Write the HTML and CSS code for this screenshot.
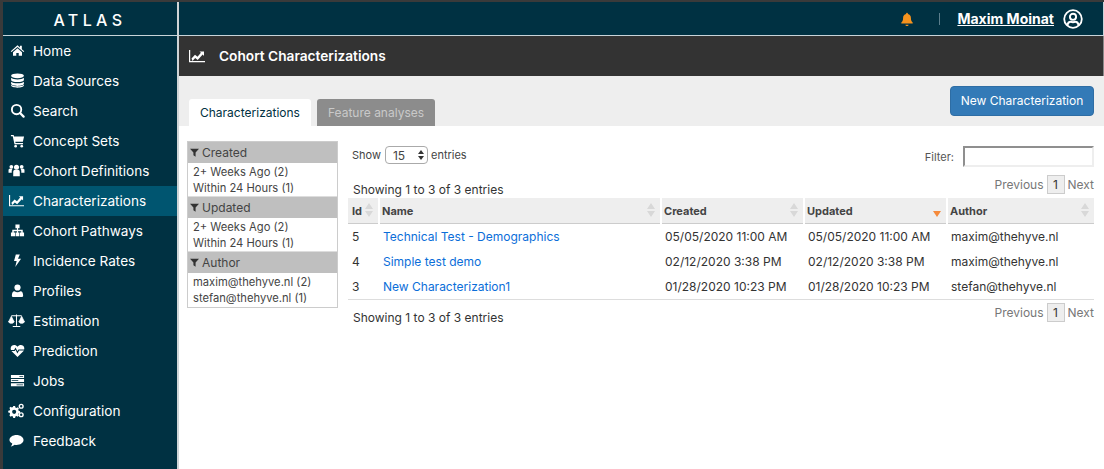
FILE: index.html
```html
<!DOCTYPE html>
<html lang="en">
<head>
    <meta charset="UTF-8">
    <meta name="viewport" content="width=device-width, initial-scale=1.0">
    <title>ATLAS - Cohort Characterizations</title>
    <link rel="stylesheet" href="styles.css">
</head>
<body>
    <div class="app">
        <aside class="sidebar">
            <div class="brand">ATLAS</div>
            <nav class="side-nav">
                <a href="#"><svg class="nav-icon" viewBox="0 0 16 16"><path d="M8 2.500 .8 8.800l.8.9L8 4.200l6.400 5.500.8-.9-2.600-2.200V3h-2v1.800z"/><path d="M3.200 9.800 8 5.700l4.800 4.100v3.900H9.300v-3H6.700v3H3.200z"/></svg>Home</a>
                <a href="#"><svg class="nav-icon" viewBox="0 0 16 16"><ellipse cx="8" cy="3" rx="6.800" ry="2.600"/><path d="M1.200 5.100v2.300c0 1.300 3 2.300 6.800 2.300s6.800-1 6.800-2.300V5.100C13.500 6.300 11 6.800 8 6.800s-5.500-.5-6.800-1.700z"/><path d="M1.200 9.200v2.300c0 1.300 3 2.300 6.800 2.300s6.800-1 6.800-2.300V9.200c-1.300 1.200-3.800 1.700-6.800 1.700s-5.500-.5-6.800-1.700z"/><path d="M1.200 12.400v.9c0 1.300 3 2.300 6.800 2.300s6.800-1 6.800-2.300v-.9c-1.300 1.200-3.800 1.700-6.800 1.700s-5.500-.5-6.800-1.700z"/></svg>Data Sources</a>
                <a href="#"><svg class="nav-icon" viewBox="0 0 16 16"><circle cx="7" cy="7" r="5" fill="none" stroke="#fff" stroke-width="2"/><path d="m10.700 10.700 3.800 3.800" stroke="#fff" stroke-width="2.400" stroke-linecap="round"/></svg>Search</a>
                <a href="#"><svg class="nav-icon" viewBox="0 0 16 16"><path d="M1 2.200h2.900l.4 1.500h10.700l-1.300 5.700H5.600l.3 1.300h8v1.200H4.800L2.900 3.400H1z"/><circle cx="6" cy="14" r="1.400"/><circle cx="12.500" cy="14" r="1.400"/></svg>Concept Sets</a>
                <a href="#" class="wide"><svg class="nav-icon" viewBox="0 0 18 16"><circle cx="9" cy="4.500" r="2.700"/><circle cx="3.500" cy="4" r="2"/><circle cx="14.500" cy="4" r="2"/><path d="M5.500 9.500c0-1.400 1-2.200 2-2.200h3c1 0 2 .8 2 2.200v4.500h-7z"/><path d="M.5 7.500c0-.9.7-1.400 1.500-1.400h2.800c-.6.700-.9 1.500-.9 2.400v1.800H.5zM17.500 7.500c0-.9-.7-1.400-1.500-1.400h-2.800c.6.700.9 1.500.9 2.400v1.800h3.400z"/></svg>Cohort Definitions</a>
                <a href="#" class="active wide"><svg class="nav-icon" viewBox="0 0 16 16"><path d="M0 2h1.200v11H16v1.200H0z"/><path d="m2.500 10.500 3.500-3.700 2.500 2 3.400-4-1.400-1.300H15v4.500l-1.300-1.400-5 5.400-2.500-2-2.700 2.900z"/></svg>Characterizations</a>
                <a href="#"><svg class="nav-icon" viewBox="0 0 16 16"><path d="M5.800 1.500h4.400v4H8.600v1.700h5v3h1.400v4h-4.400v-4H12V8.800H8.600v1.400H10v4H6v-4h1.400V8.800H4v1.400h1.400v4H1v-4h1.400v-3h5V5.500H5.800z"/></svg>Cohort Pathways</a>
                <a href="#"><svg class="nav-icon" viewBox="0 0 16 16"><path d="M6.200 1.500h4.300L8.500 6h3.300l-6.200 9 1.500-6.400H4.300z"/></svg>Incidence Rates</a>
                <a href="#"><svg class="nav-icon" viewBox="0 0 16 16"><circle cx="8" cy="4.800" r="3.300"/><path d="M3 14.800c-.7 0-1-.5-1-1.200 0-2.500.8-4.800 2.900-4.800.9.700 1.900 1.100 3.100 1.100s2.200-.4 3.100-1.100c2.100 0 2.900 2.300 2.900 4.800 0 .7-.3 1.200-1 1.200z"/></svg>Profiles</a>
                <a href="#" class="wide"><svg class="nav-icon" viewBox="0 0 18 16" fill="none" stroke="#fff"><path d="M9 1.500v12M5 14.500h8M3.500 3h11" stroke-width="1.100"/><path d="m3.500 3.500-2.700 5.500h5.400zM14.500 3.500l-2.700 5.500h5.400z" stroke-width=".8"/><path d="M.5 9c.3 1.300 1.400 2 3 2s2.700-.7 3-2zM11.500 9c.3 1.300 1.400 2 3 2s2.700-.7 3-2z" stroke-width=".8"/></svg>Estimation</a>
                <a href="#"><svg class="nav-icon" viewBox="0 0 16 16"><path d="M8 14.800 1.800 8.700C.2 6.900.5 4.300 2 3c1.700-1.400 4.400-1.100 6 .9 1.600-2 4.300-2.300 6-.9 1.500 1.300 1.800 3.900.2 5.700z"/><path d="M.5 8h4.200l1.200-2 2 4 1.500-2.500h6.100" fill="none" stroke="#003142" stroke-width="1.100"/></svg>Prediction</a>
                <a href="#"><svg class="nav-icon" viewBox="0 0 16 16"><path d="M1 2h14v3.200H1zM1 6.500h14v3.200H1zM1 11h14v3.200H1z"/><path d="M10 3.200h4v.8h-4zM1.800 7.700h7v.8h-7zM7 12.200h7v.8H7z" fill="#003142"/></svg>Jobs</a>
                <a href="#" class="wide"><svg class="nav-icon" viewBox="0 0 18 16"><path fill-rule="evenodd" d="M5.500 3.200h2l.3 1.500 1.200.6 1.300-.8 1.300 1.300-.8 1.300.5 1.200 1.500.4v1.900l-1.500.3-.5 1.200.8 1.300-1.300 1.300-1.300-.8-1.200.5-.3 1.500h-2l-.3-1.500-1.200-.5-1.300.8L1.400 13l.8-1.300-.5-1.200-1.500-.3V8.300l1.500-.4.5-1.200-.8-1.300 1.300-1.300 1.300.8 1.200-.6zM6.500 7.200a2.200 2.200 0 1 0 0 4.400 2.200 2.200 0 0 0 0-4.400z"/><circle cx="14" cy="3.500" r="2" fill="none" stroke="#fff" stroke-width="1.500"/><circle cx="14" cy="12.500" r="2" fill="none" stroke="#fff" stroke-width="1.500"/></svg>Configuration</a>
                <a href="#" class="wide"><svg class="nav-icon" viewBox="0 0 16 16"><path d="M8 2.200c4 0 7.500 2.300 7.500 5.300S12 12.800 8 12.800c-.7 0-1.300-.1-1.900-.2-1 .9-2.500 1.500-4.200 1.700 1-.9 1.500-2 1.600-3C1.600 10.300.5 9 .5 7.500c0-3 3.500-5.300 7.500-5.300z"/></svg>Feedback</a>
            </nav>
        </aside>

        <div class="main">
            <header class="topbar">
                <svg class="bell" viewBox="0 0 16 16"><path d="M8 .8c.6 0 1 .4 1 1v.6c2.300.5 3.500 2.300 3.500 4.600 0 2.600.7 3.700 2 5v1H1.500v-1c1.300-1.300 2-2.400 2-5 0-2.300 1.200-4.100 3.500-4.600v-.6c0-.6.400-1 1-1zM6.200 14.500h3.600c0 1-.8 1.500-1.800 1.500s-1.800-.5-1.800-1.500z"/></svg>
                <span class="topbar-sep"></span>
                <a href="#" class="user-name">Maxim Moinat</a>
                <svg class="user-icon" viewBox="0 0 20 20" fill="none" stroke="#fff"><circle cx="10" cy="10" r="8.800" stroke-width="1.800"/><circle cx="10" cy="7.800" r="3.100" stroke-width="1.900"/><path d="M4.300 16.300c.5-2.500 2-3.600 3.400-3.600.7.400 1.400.6 2.300.6s1.600-.2 2.300-.6c1.400 0 2.900 1.100 3.400 3.600" stroke-width="2"/></svg>
            </header>

            <div class="page-title">
                <svg class="title-icon" viewBox="0 0 16 16"><path d="M0 2h1.200v11H16v1.200H0z"/><path d="m2.500 10.500 3.500-3.700 2.500 2 3.400-4-1.400-1.300H15v4.500l-1.300-1.400-5 5.400-2.500-2-2.700 2.900z"/></svg>
                <h1>Cohort Characterizations</h1>
            </div>

            <div class="tabs-row">
                <div class="tabs">
                    <a href="#" class="tab active">Characterizations</a>
                    <a href="#" class="tab muted">Feature analyses</a>
                </div>
                <button class="btn-primary">New Characterization</button>
            </div>

            <div class="content">
                <div class="facets">
                    <div class="facet-head"><svg class="funnel" viewBox="0 0 10 10"><path d="M0 .8h10L6.200 5v4.700L3.800 8V5z"/></svg>Created</div>
                    <div class="facet-body">
                        <div>2+ Weeks Ago (2)</div>
                        <div>Within 24 Hours (1)</div>
                    </div>
                    <div class="facet-head"><svg class="funnel" viewBox="0 0 10 10"><path d="M0 .8h10L6.200 5v4.700L3.800 8V5z"/></svg>Updated</div>
                    <div class="facet-body">
                        <div>2+ Weeks Ago (2)</div>
                        <div>Within 24 Hours (1)</div>
                    </div>
                    <div class="facet-head"><svg class="funnel" viewBox="0 0 10 10"><path d="M0 .8h10L6.200 5v4.700L3.800 8V5z"/></svg>Author</div>
                    <div class="facet-body">
                        <div>maxim@thehyve.nl (2)</div>
                        <div>stefan@thehyve.nl (1)</div>
                    </div>
                </div>

                <div class="table-area">
                    <div class="table-controls">
                        <div class="length">Show <span class="fake-select">15<span class="select-arrows"></span></span> entries</div>
                        <div class="filter">Filter:<span class="filter-input"></span></div>
                    </div>
                    <div class="info-row">
                        <span class="info">Showing 1 to 3 of 3 entries</span>
                        <div class="pager"><span>Previous</span><span class="page-num">1</span><span>Next</span></div>
                    </div>
                    <table>
                        <thead>
                            <tr>
                                <th class="col-id">Id<span class="sort"></span></th>
                                <th class="col-name">Name<span class="sort"></span></th>
                                <th class="col-date">Created<span class="sort"></span></th>
                                <th class="col-date">Updated<span class="sort-desc"></span></th>
                                <th>Author<span class="sort"></span></th>
                            </tr>
                        </thead>
                        <tbody>
                            <tr>
                                <td>5</td>
                                <td><a href="#">Technical Test - Demographics</a></td>
                                <td>05/05/2020 11:00 AM</td>
                                <td>05/05/2020 11:00 AM</td>
                                <td>maxim@thehyve.nl</td>
                            </tr>
                            <tr>
                                <td>4</td>
                                <td><a href="#">Simple test demo</a></td>
                                <td>02/12/2020 3:38 PM</td>
                                <td>02/12/2020 3:38 PM</td>
                                <td>maxim@thehyve.nl</td>
                            </tr>
                            <tr>
                                <td>3</td>
                                <td><a href="#">New Characterization1</a></td>
                                <td>01/28/2020 10:23 PM</td>
                                <td>01/28/2020 10:23 PM</td>
                                <td>stefan@thehyve.nl</td>
                            </tr>
                        </tbody>
                    </table>
                    <div class="info-row">
                        <span class="info">Showing 1 to 3 of 3 entries</span>
                        <div class="pager"><span>Previous</span><span class="page-num">1</span><span>Next</span></div>
                    </div>
                </div>
            </div>
        </div>
    </div>
</body>
</html>
```

FILE: styles.css
```css
/* Common Styles */
html, body {
    margin: 0;
    padding: 0;
    height: 100%;
    overflow: hidden;
}
body {
    font-family: 'Inter', 'Liberation Sans', sans-serif;
    font-size: 12px;
    color: #333;
    background-color: #3a3a3a;
}
a { text-decoration: none; }

.app {
    display: flex;
    height: 469px;
    padding: 2px 0 0 3px;
    box-sizing: border-box;
}

/* Sidebar */
.sidebar {
    width: 174px;
    flex-shrink: 0;
    background-color: #003142;
    color: #fff;
}
.brand {
    height: 33px;
    border-bottom: 1px solid #c8d4d9;
    text-align: center;
    font-size: 16px;
    font-weight: 500;
    letter-spacing: 4.400px;
    line-height: 36px;
}
.side-nav a {
    display: flex;
    align-items: center;
    height: 30px;
    box-sizing: border-box;
    padding: 0 0 1px 30px;
    color: #fff;
    font-size: 13.600px;
    position: relative;
}
.side-nav a.active { background-color: #005570; }
.nav-icon {
    position: absolute;
    left: 7px;
    top: 7px;
    width: 15px;
    height: 15px;
    fill: #fff;
}
.wide .nav-icon { left: 5px; width: 17px; }

/* Top bar */
.main {
    flex: 1;
    min-width: 0;
    border-left: 2px solid #cfd4d6;
    background-color: #fff;
    display: flex;
    flex-direction: column;
}
.topbar {
    height: 33px;
    border-bottom: 1px solid #c8d4d9;
    border-right: 1px solid #c8d4d9;
    background-color: #003142;
    display: flex;
    align-items: center;
    justify-content: flex-end;
    padding-right: 20px;
}
.bell { width: 14px; height: 14px; fill: #f6931e; }
.topbar-sep {
    width: 1px;
    height: 12px;
    background-color: #5b7e8c;
    margin: 0 17px 0 25px;
}
.user-name {
    color: #fff;
    font-size: 14px;
    font-weight: 700;
    text-decoration: underline;
}
.user-icon { width: 20px; height: 20px; margin-left: 9px; }

/* Title */
.page-title {
    height: 40px;
    background-color: #333;
    border-right: 1px solid #8a8a8a;
    display: flex;
    align-items: center;
    padding-left: 10px;
    color: #fff;
}
.title-icon { width: 16px; height: 16px; fill: #fff; }
.page-title h1 {
    margin: 0 0 0 14px;
    font-size: 13.700px;
    font-weight: 600;
}

/* Tabs */
.tabs-row {
    height: 50px;
    background-color: #eee;
    display: flex;
    justify-content: space-between;
    padding: 10px 10px 0 10px;
    box-sizing: border-box;
}
.tabs { display: flex; align-items: flex-end; gap: 6px; }
.tab {
    height: 27px;
    line-height: 28px;
    padding: 0 11px;
    border-radius: 3px 3px 0 0;
    font-size: 12px;
}
.tab.active { background-color: #fff; color: #003142; }
.tab.muted { background-color: #8c8c8c; color: #c9c9c9; }
.btn-primary {
    width: 144px;
    height: 30px;
    padding: 0 0 2px;
    background-color: #337ab7;
    border: 1px solid #2e6da4;
    border-radius: 4px;
    color: #fff;
    font-family: inherit;
    font-size: 12px;
}

/* Content */
.content {
    flex: 1;
    display: flex;
    padding: 15px 10px 0 8px;
    gap: 10px;
}
.facets {
    width: 149px;
    flex-shrink: 0;
    align-self: flex-start;
    border: 1px solid #ccc;
    font-size: 11.200px;
    color: #444;
}
.facet-head {
    height: 21px;
    line-height: 22px;
    background-color: #bfbfbf;
    font-size: 12px;
    padding-left: 2px;
}
.funnel { width: 9px; height: 9px; fill: #333; margin-right: 3px; }
.facet-body {
    box-sizing: border-box;
    padding: 1px 5px 0;
    height: 34px;
    line-height: 16px;
    border-bottom: 1px solid #ddd;
}
.facet-body:last-child { border-bottom: none; }

.table-area { flex: 1; min-width: 0; }
.table-controls {
    display: flex;
    justify-content: space-between;
    align-items: center;
    font-size: 11px;
    height: 31px;
    box-sizing: border-box;
    padding: 5px 0 5px 4px;
    color: #444;
}
.length { display: flex; align-items: center; gap: 3px; margin-top: -3px; }
.fake-select {
    width: 43px;
    height: 18px;
    border: 1px solid #aaa;
    border-radius: 4px;
    box-sizing: border-box;
    line-height: 17px;
    padding-left: 7px;
    position: relative;
    font-size: 12px;
    margin-left: 1px;
}
.select-arrows {
    position: absolute;
    right: 3px;
    top: 3px;
    border-left: 3px solid transparent;
    border-right: 3px solid transparent;
    border-bottom: 4px solid #333;
}
.select-arrows::after {
    content: "";
    position: absolute;
    left: -3px;
    top: 6px;
    border-left: 3px solid transparent;
    border-right: 3px solid transparent;
    border-top: 4px solid #333;
}
.filter { display: flex; align-items: center; gap: 9px; color: #555; }
.filter-input {
    width: 131px;
    height: 21px;
    box-sizing: border-box;
    border: 2px solid #eee;
    border-top-color: #8f8f8f;
    border-left-color: #8f8f8f;
}

.info-row {
    display: flex;
    justify-content: space-between;
    align-items: center;
    height: 26px;
    padding-left: 5px;
}
.info { font-size: 12px; padding-top: 9px; }
.pager { display: flex; align-items: center; color: #777; font-size: 12px; gap: 3px; margin-top: -1px; }
.page-num {
    width: 18px;
    height: 19px;
    line-height: 18px;
    text-align: center;
    box-sizing: border-box;
    border: 1px solid #ccc;
    background-color: #eee;
    color: #333;
}

table {
    width: 100%;
    border-collapse: collapse;
    table-layout: fixed;
    border-bottom: 1px solid #ddd;
}
th {
    box-sizing: border-box;
    background-color: #eee;
    height: 25px;
    padding: 1px 2px 0;
    text-align: left;
    font-size: 11px;
    color: #444;
    border-bottom: 1px solid #ccc;
    border-left: 2px solid #fff;
    position: relative;
}
th:first-child { border-left: none; padding-left: 4px; }
td {
    height: 25px;
    padding: 0 4px;
    font-size: 12px;
    white-space: nowrap;
}
td a { color: #0b6ed9; }
.col-id { width: 31px; }
.col-name { width: 282px; }
.col-date { width: 143px; }
.sort::before, .sort::after {
    content: "";
    position: absolute;
    right: 5px;
    border-left: 4.500px solid transparent;
    border-right: 4.500px solid transparent;
}
.sort::before { top: 5px; border-bottom: 6px solid #d8d8d8; }
.sort::after { top: 13px; border-top: 6px solid #d8d8d8; }
.sort-desc {
    position: absolute;
    right: 5px;
    top: 13px;
    border-left: 4px solid transparent;
    border-right: 4px solid transparent;
    border-top: 6px solid #f58a3c;
}
```
